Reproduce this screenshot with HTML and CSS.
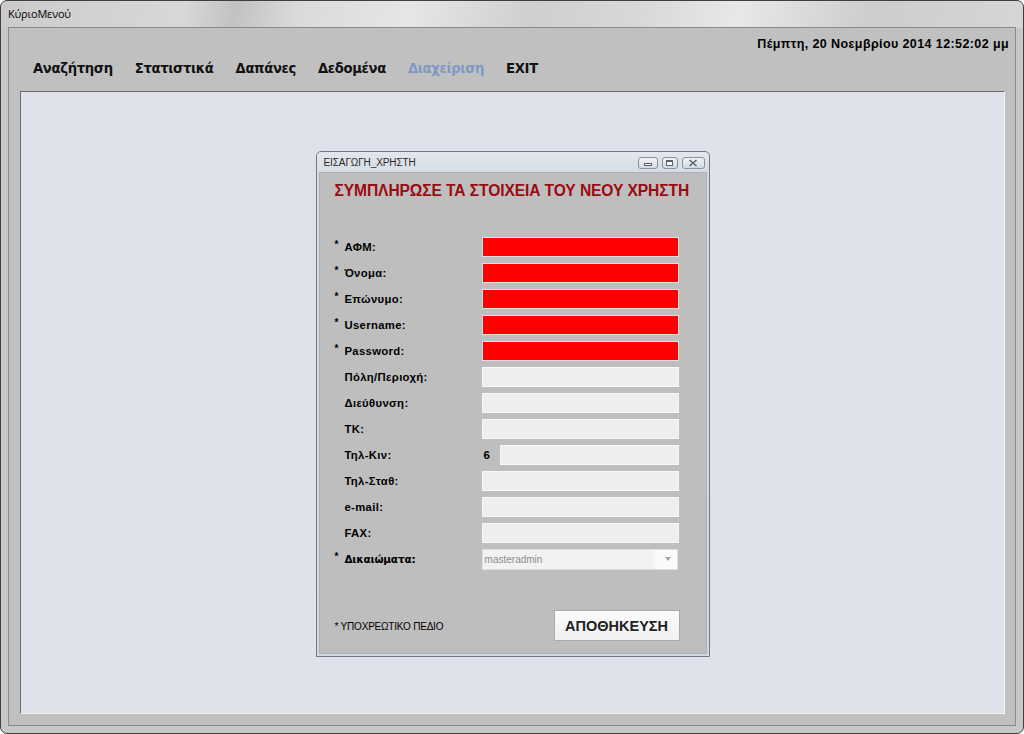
FILE: index.html
```html
<!DOCTYPE html>
<html lang="el">
<head>
<meta charset="utf-8">
<title>ΚύριοΜενού</title>
<link rel="stylesheet" href="styles.css">
</head>
<body>
<div class="window">
  <div class="titlebar">ΚύριοΜενού</div>
  <div class="client">
    <div class="datebar">Πέμπτη, 20 Νοεμβρίου 2014 12:52:02 μμ</div>
    <nav class="menu">
      <span class="menu-item first">Αναζήτηση</span>
      <span class="menu-item">Στατιστικά</span>
      <span class="menu-item">Δαπάνες</span>
      <span class="menu-item">Δεδομένα</span>
      <span class="menu-item disabled">Διαχείριση</span>
      <span class="menu-item">EXIT</span>
    </nav>
    <div class="panel">
      <div class="dialog">
        <div class="dtitle">
          <span class="dtitle-text">ΕΙΣΑΓΩΓΗ_ΧΡΗΣΤΗ</span>
          <div class="dcontrols">
            <span class="dbtn dmin"><span class="glyph-min"></span></span>
            <span class="dbtn dmax"><span class="glyph-max"></span></span>
            <span class="dbtn dclose">
              <svg width="10" height="8" viewBox="0 0 10 8"><path d="M1.5 1 L8.5 7 M8.5 1 L1.5 7" stroke="#5a6470" stroke-width="1.6" fill="none"/></svg>
            </span>
          </div>
        </div>
        <div class="dbody">
          <h1 class="heading">ΣΥΜΠΛΗΡΩΣΕ ΤΑ ΣΤΟΙΧΕΙΑ ΤΟΥ ΝΕΟΥ ΧΡΗΣΤΗ</h1>
          <div class="form">
            <div class="row"><span class="req">*</span><span class="label">ΑΦΜ:</span><input class="field red" type="text"></div>
            <div class="row"><span class="req">*</span><span class="label">Όνομα:</span><input class="field red" type="text"></div>
            <div class="row"><span class="req">*</span><span class="label">Επώνυμο:</span><input class="field red" type="text"></div>
            <div class="row"><span class="req">*</span><span class="label">Username:</span><input class="field red" type="text"></div>
            <div class="row"><span class="req">*</span><span class="label">Password:</span><input class="field red" type="password"></div>
            <div class="row"><span class="req"></span><span class="label">Πόλη/Περιοχή:</span><input class="field" type="text"></div>
            <div class="row"><span class="req"></span><span class="label">Διεύθυνση:</span><input class="field" type="text"></div>
            <div class="row"><span class="req"></span><span class="label">ΤΚ:</span><input class="field" type="text"></div>
            <div class="row"><span class="req"></span><span class="label">Τηλ-Κιν:</span><span class="prefix">6</span><input class="field short" type="text"></div>
            <div class="row"><span class="req"></span><span class="label">Τηλ-Σταθ:</span><input class="field" type="text"></div>
            <div class="row"><span class="req"></span><span class="label">e-mail:</span><input class="field" type="text"></div>
            <div class="row"><span class="req"></span><span class="label">FAX:</span><input class="field" type="text"></div>
            <div class="row row-select"><span class="req">*</span><span class="label wide">Δικαιώματα:</span>
              <div class="select"><span class="select-text">masteradmin</span><span class="select-arrow"></span></div>
            </div>
          </div>
          <div class="footer">
            <span class="note">* ΥΠΟΧΡΕΩΤΙΚΟ ΠΕΔΙΟ</span>
            <button class="save" type="button">ΑΠΟΘΗΚΕΥΣΗ</button>
          </div>
        </div>
      </div>
    </div>
  </div>
</div>
</body>
</html>
```
FILE: styles.css
```css
html, body {
  margin: 0;
  padding: 0;
  background: #ffffff;
}

.window {
  width: 1024px;
  height: 734px;
  box-sizing: border-box;
  border: 1px solid #3f3f3f;
  border-radius: 7px;
  background:
    linear-gradient(100deg, #cbcbcb 0%, #d8d8d8 18%, #c2c2c2 23%, #dadada 29%, #e6e6e6 40%, #cfcfcf 52%, #d9d9d9 63%, #e8e8e8 72%, #cdcdcd 85%, #d6d6d6 100%) top / 100% 27px no-repeat,
    #c6c6c6;
  padding: 0 7px 7px 7px;
  display: flex;
  flex-direction: column;
  font-family: "Liberation Sans", Arial, sans-serif;
  overflow: hidden;
}

.titlebar {
  height: 26px;
  line-height: 26px;
  font-family: "Open Sans", "Noto Sans", sans-serif;
  font-size: 11px;
  color: #000;
  letter-spacing: -0.2px;
}

.client {
  flex: 1;
  display: flex;
  flex-direction: column;
  background: #c0c0c0;
  border: 1px solid #8a8a8a;
  min-height: 0;
}

.datebar {
  height: 14px;
  margin-top: 9px;
  line-height: 14px;
  text-align: right;
  padding-right: 6px;
  font-family: "Liberation Sans", Arial, sans-serif;
  font-weight: bold;
  font-size: 12.5px;
  letter-spacing: 0.4px;
  color: #000;
}

.menu {
  display: flex;
  gap: 22px;
  height: 22px;
  margin-top: 7px;
  padding-left: 24px;
  align-items: center;
}

.menu-item {
  font-family: "DejaVu Sans", Verdana, sans-serif;
  font-weight: bold;
  font-size: 13.2px;
  letter-spacing: -0.35px;
  color: #111;
  line-height: 22px;
}

.menu-item.disabled {
  color: #7e99c4;
}

.panel {
  flex: 1;
  margin: 11px 10px 11px 11px;
  background: #dfe2ea;
  border-top: 1px solid #6c6c6c;
  border-left: 1px solid #6c6c6c;
  border-right: 1px solid #f4f4f4;
  border-bottom: 1px solid #f4f4f4;
  display: flex;
  justify-content: center;
  align-items: flex-start;
  padding-top: 59px;
  min-height: 0;
}

.dialog {
  width: 394px;
  height: 506px;
  box-sizing: border-box;
  border: 1px solid #6d7888;
  border-radius: 5px 5px 0 0;
  background: linear-gradient(#e4e8ee, #d6dce4 20px, #d3d9e1);
  padding: 0 2px 2px 2px;
  display: flex;
  flex-direction: column;
}

.dtitle {
  height: 20px;
  display: flex;
  align-items: center;
  justify-content: space-between;
  padding-left: 5px;
}

.dtitle-text {
  font-family: "Liberation Sans", Arial, sans-serif;
  font-size: 10px;
  color: #2a2a2a;
  letter-spacing: -0.1px;
}

.dcontrols {
  display: flex;
  gap: 4px;
  margin-top: 1px;
  padding-right: 2px;
}

.dbtn {
  height: 12px;
  box-sizing: border-box;
  border: 1px solid #8893a1;
  border-radius: 3px;
  background: linear-gradient(#f0f3f6, #d3d9e0);
  display: flex;
  align-items: center;
  justify-content: center;
}

.dmin { width: 20px; }
.dmax { width: 16px; }
.dclose { width: 23px; }

.glyph-min {
  width: 8px;
  height: 3px;
  margin-top: 3px;
  box-sizing: border-box;
  border: 1px solid #59636f;
  background: #fff;
}

.glyph-max {
  width: 7px;
  height: 6px;
  box-sizing: border-box;
  border: 1px solid #59636f;
  border-top-width: 2px;
  background: #fff;
}

.dbody {
  flex: 1;
  background: #bebebe;
  border: 1px solid #a9b0b8;
  padding: 10px 27px 0 15px;
  display: flex;
  flex-direction: column;
}

.heading {
  margin: 0;
  font-family: "Liberation Sans", Arial, sans-serif;
  font-weight: bold;
  font-size: 15.6px;
  line-height: 16px;
  color: #9a0b12;
  letter-spacing: -0.1px;
  white-space: nowrap;
}

.form {
  margin-top: 38px;
  display: flex;
  flex-direction: column;
  gap: 6px;
}

.row {
  display: flex;
  align-items: center;
  height: 20px;
}

.req {
  width: 10px;
  font-family: "Liberation Sans", Arial, sans-serif;
  font-weight: bold;
  font-size: 10px;
  align-self: flex-start;
  line-height: 16px;
  color: #000;
}

.label {
  width: 138px;
  font-family: "Liberation Sans", Arial, sans-serif;
  font-weight: bold;
  font-size: 11.3px;
  letter-spacing: 0.35px;
  color: #000;
}

.label.wide {
  font-family: "DejaVu Sans", Verdana, sans-serif;
  font-size: 10.5px;
  letter-spacing: -0.2px;
}

.field {
  width: 198px;
  height: 20px;
  box-sizing: border-box;
  margin: 0;
  padding: 0;
  border: 1px solid #f8f8f8;
  background: #eeeeee;
  outline: none;
  -webkit-appearance: none;
  appearance: none;
}

.field.red {
  background: #ff0000;
  border: 1px solid #f3d9d9;
}

.field.short {
  width: 180px;
}

.prefix {
  width: 18px;
  font-family: "Liberation Sans", Arial, sans-serif;
  font-weight: bold;
  font-size: 11.5px;
  padding-left: 2px;
  box-sizing: border-box;
}

.select {
  width: 198px;
  height: 21px;
  box-sizing: border-box;
  border: 1px solid #dedede;
  background: linear-gradient(to right, #f2f2f2 88%, #fafafa 88%);
  display: flex;
  align-items: center;
  justify-content: space-between;
  padding: 0 6px 0 2px;
}

.select-text {
  font-family: "Liberation Sans", Arial, sans-serif;
  font-size: 10px;
  color: #8c8c8c;
}

.select-arrow {
  width: 0;
  height: 0;
  border-left: 3px solid transparent;
  border-right: 3px solid transparent;
  border-top: 4px solid #a5a5a5;
}

.footer {
  margin-top: 41px;
  display: flex;
  align-items: center;
  justify-content: space-between;
}

.note {
  font-family: "Liberation Sans Narrow", "Liberation Sans", Arial, sans-serif;
  font-size: 10px;
  color: #000;
  letter-spacing: -0.2px;
  margin-top: 2px;
}

.save {
  width: 126px;
  height: 31px;
  box-sizing: border-box;
  margin: 0 -1px 0 0;
  border: 1px solid #a9a9a9;
  background: linear-gradient(#fbfbfb, #f1f1f1);
  font-family: "Liberation Sans", Arial, sans-serif;
  font-weight: bold;
  font-size: 14.5px;
  color: #222;
  padding: 0;
}
```
